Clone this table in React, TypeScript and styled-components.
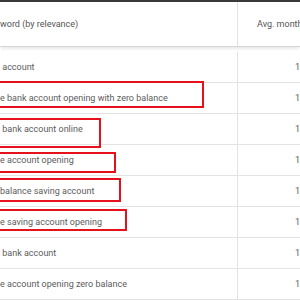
import React from "react";
import styled, { createGlobalStyle } from "styled-components";

const Global = createGlobalStyle`
  html, body { margin: 0; padding: 0; background: #fff; }
  body { font-family: Roboto, "Liberation Sans", Arial, sans-serif; }
  #root { width: 300px; height: 300px; overflow: hidden; }
`;

const Table = styled.div`
  width: 300px;
  border-top: 2px solid #3a3a3a;
  background: #fff;
`;

const HeaderRow = styled.div`
  display: grid;
  grid-template-columns: 238px 1fr;
  height: 44px;
  border-bottom: 1px solid #d6d6d6;
  box-shadow: 0 3px 3px -1px rgba(0, 0, 0, 0.09);
  position: relative;
  z-index: 1;
  margin-bottom: 5px;
`;

const HeadCell = styled.div<{ $right?: boolean }>`
  display: flex;
  align-items: center;
  font-size: 9px;
  color: #555;
  white-space: pre;
  overflow: hidden;
  padding-left: ${(p) => (p.$right ? "19px" : "0")};
  border-right: ${(p) => (p.$right ? "none" : "1px solid #e2e2e2")};
`;

const Row = styled.div`
  display: grid;
  grid-template-columns: 238px 1fr;
  height: 30px;
  border-bottom: 1px solid #e3e3e3;
  position: relative;
`;

const KeywordCell = styled.div`
  display: flex;
  align-items: center;
  font-size: 9px;
  color: #5c5c5c;
  white-space: pre;
  overflow: hidden;
  border-right: 1px solid #e2e2e2;
`;

const NumCell = styled.div`
  display: flex;
  align-items: center;
  font-size: 9px;
  color: #5c5c5c;
  white-space: pre;
  padding-left: 57px;
  overflow: hidden;
`;

const Highlight = styled.div<{ $top: number; $height: number; $right: number }>`
  position: absolute;
  left: -10px;
  top: ${(p) => p.$top}px;
  height: ${(p) => p.$height}px;
  width: ${(p) => p.$right + 10}px;
  border: 2px solid #e5121b;
  box-sizing: border-box;
  pointer-events: none;
`;

type Item = {
  text: string;
  box?: { top: number; height: number; right: number };
};

const items: Item[] = [
  { text: " account" },
  { text: "e bank account opening with zero balance", box: { top: -2, height: 27, right: 204 } },
  { text: " bank account online", box: { top: 4, height: 30, right: 101 } },
  { text: "e account opening", box: { top: 7, height: 21, right: 116 } },
  { text: "balance saving account", box: { top: 2, height: 24, right: 121 } },
  { text: "e saving account opening", box: { top: 2, height: 22, right: 127 } },
  { text: " bank account" },
  { text: "e account opening zero balance" },
];

export default function App() {
  return (
    <>
      <Global />
      <Table>
        <HeaderRow>
          <HeadCell>word (by relevance)</HeadCell>
          <HeadCell $right>Avg. monthly searches</HeadCell>
        </HeaderRow>
        {items.map((it, i) => (
          <Row key={i}>
            <KeywordCell>{it.text}</KeywordCell>
            <NumCell>1K – 10K</NumCell>
            {it.box && <Highlight $top={it.box.top} $height={it.box.height} $right={it.box.right} />}
          </Row>
        ))}
      </Table>
    </>
  );
}
